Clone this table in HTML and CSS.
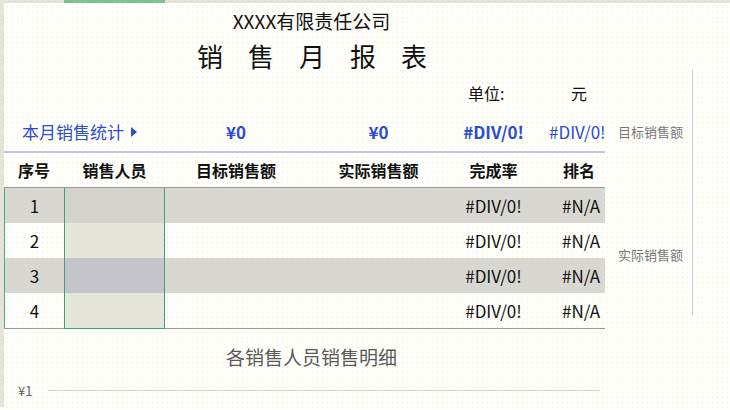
FILE: index.html
```html
<!DOCTYPE html>
<html lang="zh-CN">
<head>
  <meta charset="UTF-8">
  <title>销售月报表</title>
  <link rel="stylesheet" href="styles.css">
</head>
<body>
  <div class="page">
    <div class="topbar">
      <span></span><span class="sel"></span>
    </div>

    <div class="sheet">
      <div class="row company">XXXX有限责任公司</div>
      <div class="row title">销售月报表</div>

      <div class="row grid unit">
        <span class="span4"></span>
        <span class="unit-label">单位:</span>
        <span class="unit-value">元</span>
      </div>

      <div class="row grid summary">
        <span class="span2 summary-label">本月销售统计 <i class="arrow"></i></span>
        <span class="c">¥0</span>
        <span class="c">¥0</span>
        <span class="c">#DIV/0!</span>
        <span class="clip">#DIV/0!</span>
      </div>

      <div class="row grid head">
        <span class="c">序号</span>
        <span class="c">销售人员</span>
        <span class="c">目标销售额</span>
        <span class="c">实际销售额</span>
        <span class="c">完成率</span>
        <span class="r">排名</span>
      </div>

      <div class="row grid data odd">
        <span class="c no">1</span><span class="person"></span><span></span><span></span>
        <span class="c">#DIV/0!</span><span class="r">#N/A</span>
      </div>
      <div class="row grid data">
        <span class="c no">2</span><span class="person"></span><span></span><span></span>
        <span class="c">#DIV/0!</span><span class="r">#N/A</span>
      </div>
      <div class="row grid data odd dark">
        <span class="c no">3</span><span class="person"></span><span></span><span></span>
        <span class="c">#DIV/0!</span><span class="r">#N/A</span>
      </div>
      <div class="row grid data last">
        <span class="c no">4</span><span class="person"></span><span></span><span></span>
        <span class="c">#DIV/0!</span><span class="r">#N/A</span>
      </div>

      <div class="chart">
        <div class="chart-title">各销售人员销售明细</div>
        <div class="axis">
          <span class="tick">¥1</span>
          <span class="gridline"></span>
        </div>
      </div>
    </div>

    <!-- legend of the chart object lying over the sheet -->
    <div class="legend">
      <span class="legend-item first">目标销售额</span>
      <span class="legend-item">实际销售额</span>
    </div>
  </div>
</body>
</html>
```

FILE: styles.css
```css
body {
  margin: 0;
  width: 730px;
  height: 410px;
  overflow: hidden;
  font-family: "Noto Sans CJK SC", "Noto Sans", sans-serif;
  color: #111;
  background-color: #fffffd;
  background-image: radial-gradient(circle, #f5f0a0 0.55px, transparent 0.9px);
  background-size: 5px 5px;
}
.page {
  position: relative;
  height: 407px;
  border-left: 4px solid #e4e4d8;
}
.topbar {
  display: grid;
  grid-template-columns: 60px 101px;
  height: 3px;
  background: #e4e4d8;
  margin-left: -4px;
  padding-left: 4px;
}
.topbar .sel {
  background: #7cc08e;
}
.sheet {
  width: 601px;
}
.grid {
  display: grid;
  grid-template-columns: 60px 101px 142px 143px 87px 68px;
  align-items: center;
}
.grid > span {
  height: 100%;
  display: flex;
  align-items: center;
  white-space: nowrap;
}
.c {
  justify-content: center;
}
.r {
  justify-content: flex-end;
}
.span2 {
  grid-column: span 2;
}
.span4 {
  grid-column: span 4;
}
.company {
  height: 35px;
  line-height: 35px;
  text-align: center;
  padding-left: 14px;
  font-size: 19px;
}
.title {
  height: 36px;
  line-height: 36px;
  text-align: center;
  padding-left: 40px;
  font-size: 26px;
  letter-spacing: 25px;
}
.unit {
  height: 38px;
  font-size: 16px;
}
.unit-label {
  padding-left: 18px;
}
.unit-value {
  padding-left: 34px;
}
.summary {
  height: 39px;
  font-size: 17px;
  color: #2b4cd0;
  border-bottom: 2px solid #c4c4d8;
}
.summary .c {
  font-weight: bold;
}
.summary-label {
  padding-left: 18px;
  gap: 7px;
}
.arrow {
  display: inline-block;
  border-left: 6px solid #2b4cd0;
  border-top: 5px solid transparent;
  border-bottom: 5px solid transparent;
}
.clip {
  padding-left: 12px;
  overflow: hidden;
}
.head {
  height: 34px;
  font-size: 16px;
  font-weight: bold;
  border-bottom: 1px solid #9a9a9a;
}
.head .r {
  padding-right: 10px;
}
.data {
  height: 35px;
  font-size: 17px;
}
.data .r {
  padding-right: 5px;
}
.data.odd {
  background: #d8d8d0;
}
.data.last {
  border-bottom: 1px solid #9a9a9a;
}
.data .no {
  border-left: 1px solid #4ea884;
}
.person {
  border-left: 1px solid #3fa27a;
  border-right: 1px solid #3fa27a;
  background: #e6e5da;
}
.odd .person {
  background: #d3d3ca;
}
.dark .person {
  background: #c4c4ca;
}
.last .person {
  border-bottom: 1px solid #3fa27a;
}
.chart {
  padding-top: 15px;
}
.chart-title {
  text-align: center;
  padding-left: 14px;
  font-size: 19px;
  line-height: 26px;
  color: #5a5a5a;
}
.axis {
  display: flex;
  align-items: center;
  margin-top: 11px;
  padding-left: 14px;
  gap: 16px;
  height: 18px;
}
.tick {
  font-size: 13px;
  color: #666;
}
.gridline {
  flex: 1;
  height: 0;
  border-top: 1px solid #d6d6d6;
  margin-right: 5px;
}
.legend {
  position: absolute;
  left: 606px;
  top: 70px;
  width: 74px;
  height: 245px;
  border-right: 1px solid #cfcfcf;
  display: flex;
  flex-direction: column;
  align-items: flex-start;
  padding-left: 8px;
}
.legend-item {
  font-size: 13px;
  color: #777;
  margin-top: 104px;
}
.legend-item.first {
  margin-top: 52px;
}
```
